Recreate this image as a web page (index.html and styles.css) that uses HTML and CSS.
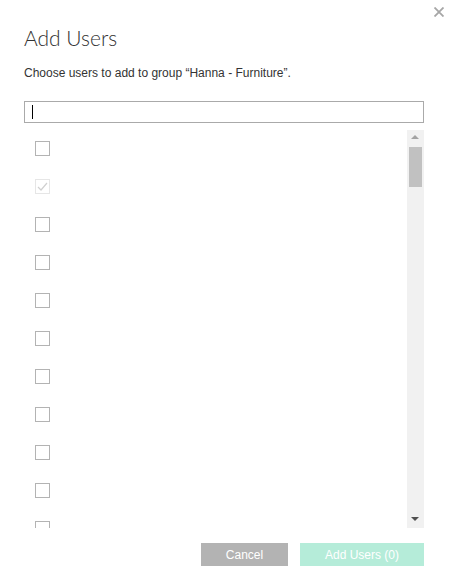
FILE: index.html
```html
<!DOCTYPE html>
<html>
<head>
<meta charset="utf-8">
<link rel="stylesheet" href="styles.css">
</head>
<body>
<div class="dialog">
  <button class="close" aria-label="Close">
    <svg width="10" height="10" viewBox="0 0 10 10"><path d="M0.5 0.5 L9.5 9.5 M9.5 0.5 L0.5 9.5" stroke="#a6a6a6" stroke-width="1.8" fill="none"/></svg>
  </button>
  <h1 class="title">Add Users</h1>
  <p class="subtitle">Choose users to add to group “Hanna - Furniture”.</p>
  <div class="search"><span class="caret"></span></div>
  <div class="listwrap">
    <ul class="list">
      <li class="row"><span class="cb"></span></li>
      <li class="row"><span class="cb disabled"><svg width="11" height="9" viewBox="0 0 11 9"><path d="M1 5 L4 8 L10 1" stroke="#d0d0d0" stroke-width="1.2" fill="none"/></svg></span></li>
      <li class="row"><span class="cb"></span></li>
      <li class="row"><span class="cb"></span></li>
      <li class="row"><span class="cb"></span></li>
      <li class="row"><span class="cb"></span></li>
      <li class="row"><span class="cb"></span></li>
      <li class="row"><span class="cb"></span></li>
      <li class="row"><span class="cb"></span></li>
      <li class="row"><span class="cb"></span></li>
      <li class="row"><span class="cb"></span></li>
    </ul>
    <div class="scrollbar">
      <span class="arrow up"></span>
      <span class="thumb"></span>
      <span class="track"></span>
      <span class="arrow down"></span>
    </div>
  </div>
  <div class="actions">
    <button class="btn cancel">Cancel</button>
    <button class="btn add">Add Users (0)</button>
  </div>
</div>
</body>
</html>
```
FILE: styles.css
```css
html, body {
  margin: 0;
  padding: 0;
  background: #fff;
}
body {
  width: 454px;
  height: 578px;
  overflow: hidden;
  font-family: Arial, "Liberation Sans", sans-serif;
}
.dialog {
  position: relative;
  width: 454px;
  height: 578px;
  box-sizing: border-box;
  padding: 0 30px 0 24px;
  display: flex;
  flex-direction: column;
}
.close {
  position: absolute;
  top: 7px;
  left: 434px;
  width: 10px;
  height: 10px;
  padding: 0;
  border: 0;
  background: none;
  display: block;
}
.close svg { display: block; }
.title {
  margin: 25px 0 0 0;
  font-family: Lato, "Open Sans", sans-serif;
  font-weight: 300;
  font-size: 21px;
  line-height: 26px;
  color: #333;
}
.subtitle {
  margin: 15px 0 0 0;
  font-size: 12px;
  line-height: 14px;
  color: #333;
}
.search {
  margin-top: 21px;
  height: 20px;
  border: 1px solid #aaa;
  display: flex;
  align-items: center;
  padding-left: 7px;
}
.caret {
  width: 1px;
  height: 14px;
  background: #000;
}
.listwrap {
  margin-top: 7px;
  height: 398px;
  display: flex;
  overflow: hidden;
}
.list {
  list-style: none;
  margin: 0;
  padding: 0 0 0 11px;
  flex: 1;
  overflow: hidden;
}
.row {
  height: 38px;
  display: flex;
  align-items: flex-start;
  padding-top: 11px;
  box-sizing: border-box;
}
.cb {
  width: 13px;
  height: 13px;
  border: 1px solid #b3b3b3;
  display: flex;
  align-items: center;
  justify-content: center;
  background: #fff;
}
.cb.disabled {
  border-color: #e6e6e6;
}
.cb svg { display: block; }
.scrollbar {
  width: 17px;
  background: #f1f1f1;
  display: flex;
  flex-direction: column;
  align-items: center;
}
.arrow {
  height: 17px;
  width: 17px;
  position: relative;
  flex: none;
}
.arrow::after {
  content: "";
  position: absolute;
  left: 4px;
  width: 0;
  height: 0;
  border-left: 4px solid transparent;
  border-right: 4px solid transparent;
}
.arrow.up::after {
  top: 5px;
  border-bottom: 4px solid #a3a3a3;
}
.arrow.down::after {
  top: 6px;
  border-top: 4px solid #505050;
}
.thumb {
  width: 13px;
  height: 40px;
  background: #c1c1c1;
  flex: none;
}
.track { flex: 1; }
.actions {
  margin-top: 15px;
  display: flex;
  justify-content: flex-end;
  gap: 12px;
}
.btn {
  height: 23px;
  border: 0;
  padding: 0;
  font-family: Arial, "Liberation Sans", sans-serif;
  font-size: 12px;
  color: #fff;
}
.cancel {
  width: 87px;
  background: #b3b3b3;
}
.add {
  width: 124px;
  background: #b5ecd9;
}
```
